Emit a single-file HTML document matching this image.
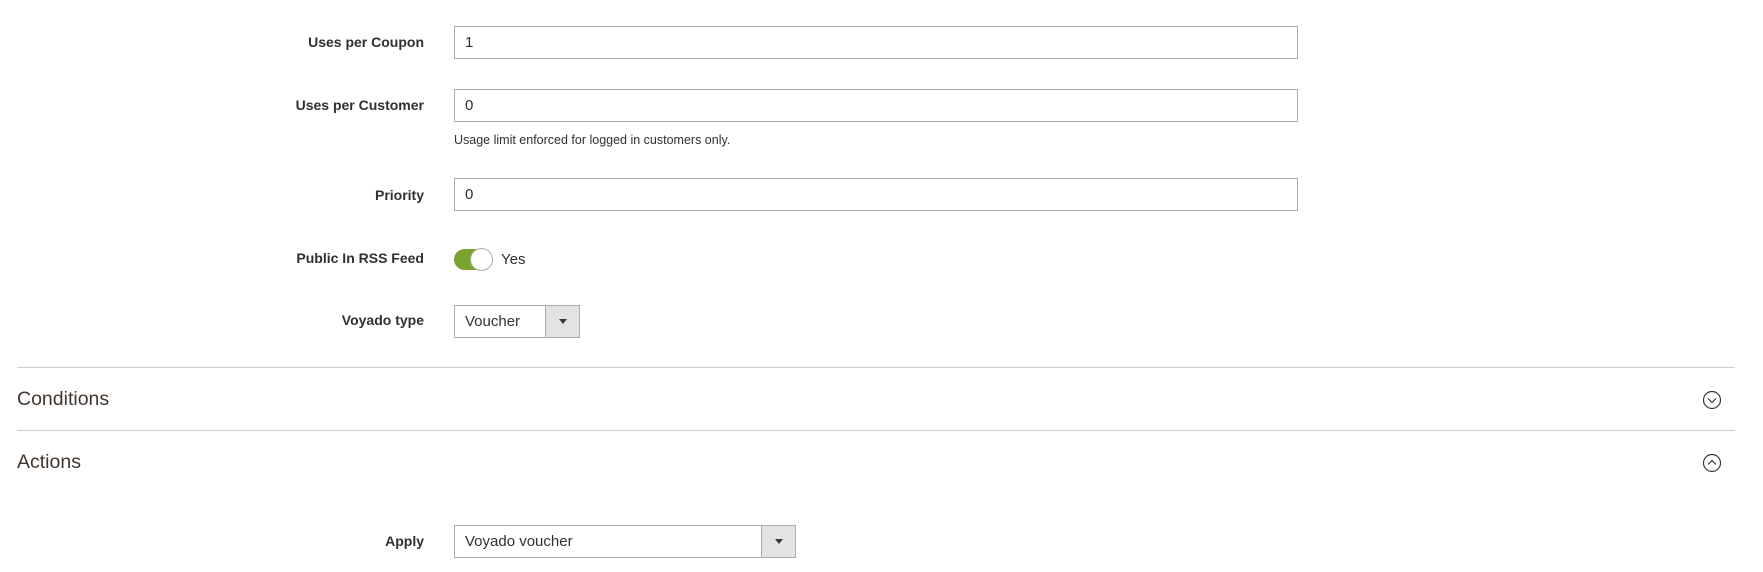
<!DOCTYPE html>
<html><head><style>
body{margin:0;width:1763px;height:572px;background:#fff;font-family:"Liberation Sans",sans-serif;color:#303030;position:relative;overflow:hidden}
.l{position:absolute;right:1339px;font-size:14px;font-weight:bold;color:#303030;white-space:nowrap}
.in{position:absolute;left:454px;height:31px;border:1px solid #adadad;box-sizing:content-box;font-size:15px;line-height:31px;padding-left:10px;width:832px}
.note{position:absolute;left:454px;top:133px;font-size:12.5px;color:#303030}
.sel{position:absolute;left:454px;border:1px solid #adadad;height:31px;font-size:15px;line-height:31px;padding-left:10px;box-sizing:content-box}
.sel .b{position:absolute;right:0;top:0;width:33px;height:31px;background:#e3e3e3;border-left:1px solid #adadad}
.sel .b:after{content:"";position:absolute;left:13px;top:13px;border-left:4px solid transparent;border-right:4px solid transparent;border-top:5px solid #41362f}
.hr{position:absolute;left:17px;width:1718px;height:1px;background:#cccccc}
.h{position:absolute;left:17px;font-size:19.5px;color:#41362f}
</style></head><body>
<div class="l" style="top:34px">Uses per Coupon</div>
<div class="in" style="top:26px">1</div>
<div class="l" style="top:97px">Uses per Customer</div>
<div class="in" style="top:89px">0</div>
<div class="note">Usage limit enforced for logged in customers only.</div>
<div class="l" style="top:187px">Priority</div>
<div class="in" style="top:178px">0</div>
<div class="l" style="top:250px">Public In RSS Feed</div>
<div style="position:absolute;left:454px;top:249px;width:37px;height:21px;border-radius:11px;background:#79a22e"></div>
<div style="position:absolute;left:470px;top:248px;width:21px;height:21px;border-radius:50%;background:#fff;border:1px solid #adadad"></div>
<div style="position:absolute;left:501px;top:251px;font-size:15px">Yes</div>
<div class="l" style="top:312px">Voyado type</div>
<div class="sel" style="top:305px;width:114px">Voucher<div class="b"></div></div>
<div class="hr" style="top:367px"></div>
<div class="h" style="top:388px">Conditions</div>
<svg style="position:absolute;left:1702px;top:390px" width="20" height="20"><circle cx="10" cy="10" r="8.5" fill="none" stroke="#41362f" stroke-width="1.2"/><path d="M6 8.5l4 4 4-4" fill="none" stroke="#41362f" stroke-width="1.2"/></svg>
<div class="hr" style="top:430px"></div>
<div class="h" style="top:451px">Actions</div>
<svg style="position:absolute;left:1702px;top:453px" width="20" height="20"><circle cx="10" cy="10" r="8.5" fill="none" stroke="#41362f" stroke-width="1.2"/><path d="M6 11.5l4-4 4 4" fill="none" stroke="#41362f" stroke-width="1.2"/></svg>
<div class="l" style="top:533px">Apply</div>
<div class="sel" style="top:525px;width:330px">Voyado voucher<div class="b"></div></div>
</body></html>
